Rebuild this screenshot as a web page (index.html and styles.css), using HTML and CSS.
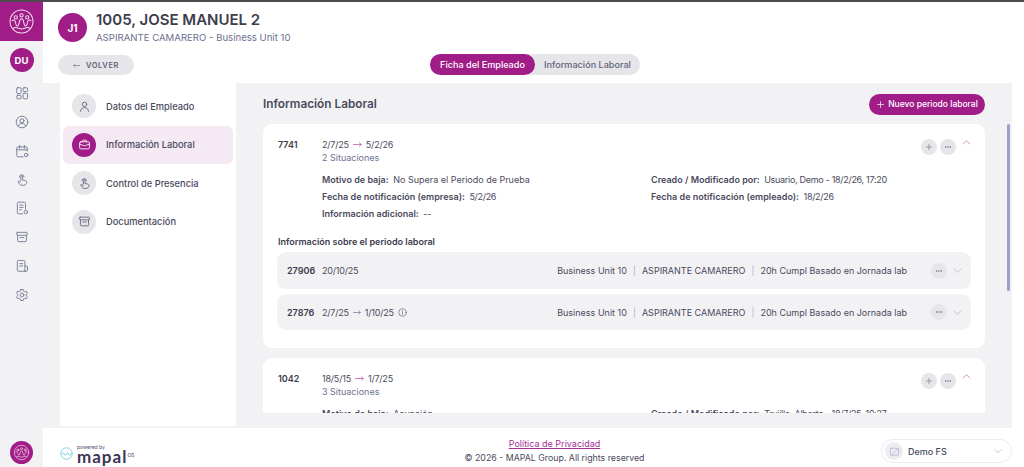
FILE: index.html
```html
<!DOCTYPE html>
<html lang="es">
<head>
<meta charset="utf-8">
<title>Información Laboral</title>
<link rel="stylesheet" href="styles.css">
</head>
<body>
<svg class="defs" width="0" height="0">
  <defs>
    <symbol id="i-user" viewBox="0 0 24 24"><circle cx="12" cy="8" r="4"/><path d="M4.500 21c.5-4.500 3.500-7 7.500-7s7 2.500 7.500 7"/></symbol>
    <symbol id="i-case" viewBox="0 0 24 24"><rect x="3" y="7" width="18" height="13" rx="2"/><path d="M8.500 7V5a1 1 0 0 1 1-1h5a1 1 0 0 1 1 1v2M3 11l7 3h4l7-3"/></symbol>
    <symbol id="i-hand" viewBox="0 0 24 24"><path d="M10 13V6.500a1.500 1.500 0 0 1 3 0V12l5 1c1.500.3 2.500 1.500 2.300 3-.3 3-2.300 5-5.300 5h-3c-2.500 0-4-1-5-3l-2-3.500c1-1 2.500-.8 3.500.5L10 16"/><path d="M7.500 7a4 4 0 0 1 8 0"/></symbol>
    <symbol id="i-box" viewBox="0 0 24 24"><rect x="3" y="4" width="18" height="5" rx="1"/><path d="M4.500 9v9a2 2 0 0 0 2 2h11a2 2 0 0 0 2-2V9M9 13h6"/></symbol>
    <symbol id="i-plus" viewBox="0 0 24 24"><path d="M12 4v16M4 12h16"/></symbol>
    <symbol id="i-down" viewBox="0 0 24 24"><path d="M3 8l9 9 9-9"/></symbol>
    <symbol id="i-up" viewBox="0 0 24 24"><path d="M3 16l9-9 9 9"/></symbol>
    <symbol id="i-logo" viewBox="0 0 40 40"><circle cx="20" cy="20" r="17"/><circle cx="20" cy="11" r="2.400"/><circle cx="11.500" cy="14" r="2.400"/><circle cx="28.500" cy="14" r="2.400"/><path d="M6 19c3-3 5 0 5.500 4s3.500 5 4.500 1 1-8 4-8 3 4 4 8 4 3 4.500-1 2.500-7 5.500-4"/><path d="M8 30c4-3 8 1 12 1s8-4 12-1"/></symbol>
    <symbol id="i-dots" viewBox="0 0 24 24"><circle cx="5" cy="12" r="2.200"/><circle cx="12" cy="12" r="2.200"/><circle cx="19" cy="12" r="2.200"/></symbol>
    <symbol id="i-arrow" viewBox="0 0 24 12"><path d="M1 6h21M17 1.500 22 6l-5 4.500"/></symbol>
  </defs>
</svg>

<div class="topline"></div>
<div class="app">
  <nav class="rail">
    <div class="rail-logo"><svg class="ico logo-ico"><use href="#i-logo"/></svg></div>
    <div class="rail-avatar">DU</div>
    <div class="rail-icons">
      <svg class="rail-ico" viewBox="0 0 24 24"><rect x="3" y="3" width="7.500" height="10" rx="1.500"/><rect x="14" y="3" width="7.500" height="6.500" rx="1.500"/><rect x="3" y="16" width="7.500" height="6" rx="1.500"/><rect x="14" y="12.500" width="7.500" height="9.500" rx="1.500"/></svg>
      <svg class="rail-ico" viewBox="0 0 24 24"><circle cx="12" cy="12" r="10"/><circle cx="12" cy="10" r="3.500"/><path d="M5.500 19.500c1-3.500 3.500-5 6.500-5s5.500 1.500 6.500 5"/></svg>
      <svg class="rail-ico" viewBox="0 0 24 24"><path d="M21 12V7a2 2 0 0 0-2-2H5a2 2 0 0 0-2 2v13a2 2 0 0 0 2 2h9M3 10h18M8 2.500v5M16 2.500v5"/><circle cx="19" cy="19" r="3"/></svg>
      <svg class="rail-ico"><use href="#i-hand"/></svg>
      <svg class="rail-ico" viewBox="0 0 24 24"><path d="M13 22H6a2 2 0 0 1-2-2V4a2 2 0 0 1 2-2h10a2 2 0 0 1 2 2v10M8 7h6M8 11h6M8 15h3"/><circle cx="18.500" cy="19" r="3"/></svg>
      <svg class="rail-ico"><use href="#i-box"/></svg>
      <svg class="rail-ico" viewBox="0 0 24 24"><path d="M17 21H6a2 2 0 0 1-2-2V4a1.500 1.500 0 0 1 1.500-1.500H15A2 2 0 0 1 17 4.500V21zM17 12h3.500a1 1 0 0 1 1 1v6a2 2 0 0 1-2 2H17M8 8h5M8 12h5"/></svg>
      <svg class="rail-ico" viewBox="0 0 24 24"><circle cx="12" cy="12" r="3.200"/><path d="M10 2.500h4l.6 2.900 1.900 1.100 2.800-1 2 3.500-2.200 1.900v2.200l2.200 1.900-2 3.500-2.800-1-1.900 1.100-.6 2.900h-4l-.6-2.900-1.900-1.100-2.800 1-2-3.500L4.900 13v-2L2.700 9l2-3.500 2.800 1 1.900-1.100z"/></svg>
    </div>
    <div class="rail-foot"><svg class="ico foot-ico"><use href="#i-logo"/></svg></div>
  </nav>

  <div class="content">
    <header class="head">
      <div class="avatar">J1</div>
      <div class="who">
        <h1 class="name">1005, JOSE MANUEL 2</h1>
        <p class="role">ASPIRANTE CAMARERO - Business Unit 10</p>
      </div>
    </header>

    <div class="toolbar">
      <button class="back"><svg class="ico back-ico" viewBox="0 0 24 12"><path d="M23 6H2M7 1.500 2 6l5 4.500"/></svg>VOLVER</button>
      <div class="tabs">
        <span class="tab tab-on">Ficha del Empleado</span>
        <span class="tab">Información Laboral</span>
      </div>
    </div>

    <main class="body">
      <aside class="menu">
        <a class="menu-item"><span class="menu-dot"><svg class="ico"><use href="#i-user"/></svg></span>Datos del Empleado</a>
        <a class="menu-item menu-on"><span class="menu-dot"><svg class="ico"><use href="#i-case"/></svg></span>Información Laboral</a>
        <a class="menu-item"><span class="menu-dot"><svg class="ico"><use href="#i-hand"/></svg></span>Control de Presencia</a>
        <a class="menu-item"><span class="menu-dot"><svg class="ico"><use href="#i-box"/></svg></span>Documentación</a>
      </aside>

      <section class="panel">
        <div class="panel-head">
          <h2 class="panel-title">Información Laboral</h2>
          <button class="new"><svg class="ico new-ico"><use href="#i-plus"/></svg>Nuevo periodo laboral</button>
        </div>
        <div class="scroll">
          <article class="card">
            <div class="card-head">
              <b class="card-id">7741</b>
              <div class="card-when">
                <div class="dates">2/7/25 <svg class="ico arrow"><use href="#i-arrow"/></svg> 5/2/26</div>
                <div class="situ">2 Situaciones</div>
              </div>
              <div class="acts">
                <span class="btn"><svg class="ico plus"><use href="#i-plus"/></svg></span>
                <span class="btn"><svg class="ico dots"><use href="#i-dots"/></svg></span>
                <svg class="ico chev-up"><use href="#i-up"/></svg>
              </div>
            </div>
            <div class="facts">
              <div><b>Motivo de baja:</b> No Supera el Periodo de Prueba</div>
              <div><b>Creado / Modificado por:</b> <span class="tight">Usuario, Demo - 18/2/26, 17:20</span></div>
              <div><b>Fecha de notificación (empresa):</b> <span class="tight">5/2/26</span></div>
              <div><b>Fecha de notificación (empleado):</b> <span class="tight">18/2/26</span></div>
              <div><b>Información adicional:</b> --</div>
            </div>
            <h3 class="sub-title">Información sobre el periodo laboral</h3>
            <div class="row row-a">
              <b class="row-id">27906</b>
              <span class="row-date">20/10/25</span>
              <span class="row-info">Business Unit 10<i>|</i>ASPIRANTE CAMARERO<i>|</i>20h Cumpl Basado en Jornada lab</span>
              <span class="btn"><svg class="ico dots"><use href="#i-dots"/></svg></span>
              <svg class="ico chev-down"><use href="#i-down"/></svg>
            </div>
            <div class="row">
              <b class="row-id">27876</b>
              <span class="row-date">2/7/25 <svg class="ico arrow-g"><use href="#i-arrow"/></svg> 1/10/25 <svg class="ico info" viewBox="0 0 24 24"><circle cx="12" cy="12" r="10"/><path d="M12 11v6M12 7v1.500"/></svg></span>
              <span class="row-info">Business Unit 10<i>|</i>ASPIRANTE CAMARERO<i>|</i>20h Cumpl Basado en Jornada lab</span>
              <span class="btn"><svg class="ico dots"><use href="#i-dots"/></svg></span>
              <svg class="ico chev-down"><use href="#i-down"/></svg>
            </div>
          </article>

          <article class="card">
            <div class="card-head">
              <b class="card-id">1042</b>
              <div class="card-when">
                <div class="dates">18/5/15 <svg class="ico arrow"><use href="#i-arrow"/></svg> 1/7/25</div>
                <div class="situ">3 Situaciones</div>
              </div>
              <div class="acts">
                <span class="btn"><svg class="ico plus"><use href="#i-plus"/></svg></span>
                <span class="btn"><svg class="ico dots"><use href="#i-dots"/></svg></span>
                <svg class="ico chev-up"><use href="#i-up"/></svg>
              </div>
            </div>
            <div class="facts">
              <div><b>Motivo de baja:</b> Asunción</div>
              <div><b>Creado / Modificado por:</b> <span class="tight">Trujillo, Alberto - 18/7/25, 10:27</span></div>
            </div>
          </article>
        </div>
        <div class="scrollbar"></div>
      </section>
    </main>

    <footer class="foot">
      <div class="brand">
        <svg class="brand-ico" viewBox="0 0 24 24"><circle cx="12" cy="12" r="10.500"/><path d="M3 13c2-3 3.500-3 5 0s3 3 4 0 3-3 4 0 3 2 5 0"/></svg>
        <div class="brand-text"><span class="powered">powered by</span><span class="mapal">mapal<sup>OS</sup></span></div>
      </div>
      <div class="legal">
        <a class="policy">Política de Privacidad</a>
        <span>© 2026 - MAPAL Group. All rights reserved</span>
      </div>
      <div class="select">
        <span class="sel-dot"><svg class="ico sel-ico" viewBox="0 0 24 24"><rect x="3" y="5" width="18" height="15" rx="1"/><path d="M5 20 20 5"/></svg></span>
        <span class="sel-text">Demo FS</span>
        <svg class="ico chev-sel"><use href="#i-down"/></svg>
      </div>
    </footer>
  </div>
</div>
</body>
</html>
```

FILE: styles.css
```css
* { box-sizing: border-box; }
html, body { margin: 0; height: 100%; }
body {
  font-family: "Inter", "Liberation Sans", sans-serif;
  font-size: 9px;
  color: #4a4a5c;
  background: #fff;
  overflow: hidden;
  display: flex;
  flex-direction: column;
}
h1, h2, h3, p { margin: 0; }
button { font-family: inherit; border: 0; padding: 0; }
.defs { position: absolute; }
.ico { fill: none; stroke: currentColor; stroke-width: 1.6; stroke-linecap: round; stroke-linejoin: round; display: block; }

.topline { height: 2px; background: #4b4b4f; flex: none; }
.app { flex: 1; min-height: 0; display: flex; }

.rail { width: 43px; flex: none; background: #f2f2f5; display: flex; flex-direction: column; align-items: center; }
.rail-logo { width: 43px; height: 39px; background: #a01c87; display: flex; align-items: center; justify-content: center; color: #f3dcee; }
.logo-ico { width: 27px; height: 27px; stroke-width: 1.5; }
.rail-avatar { width: 24px; height: 24px; margin-top: 7px; border-radius: 50%; background: #a01c87; color: #fff; font-size: 9.500px; font-weight: 700; display: flex; align-items: center; justify-content: center; }
.rail-icons { margin-top: 14px; display: flex; flex-direction: column; gap: 14.860px; color: #6f7390; }
.rail-ico { width: 14px; height: 14px; fill: none; stroke: currentColor; stroke-width: 1.500; stroke-linecap: round; stroke-linejoin: round; display: block; }
.rail-foot { margin-top: auto; margin-bottom: 3px; width: 23px; height: 23px; border-radius: 50%; background: #a01c87; color: #f3dcee; display: flex; align-items: center; justify-content: center; }
.foot-ico { width: 17px; height: 17px; }

.content { flex: 1; min-width: 0; display: flex; flex-direction: column; }
.head { height: 50px; flex: none; display: flex; align-items: flex-start; gap: 9px; padding: 11px 0 0 15px; }
.who { margin-top: -1px; }
.avatar { width: 29px; height: 29px; border-radius: 50%; background: #a01c87; color: #fff; font-size: 10px; font-weight: 700; display: flex; align-items: center; justify-content: center; }
.name { font-size: 15px; line-height: 16px; font-weight: 600; color: #3d3d4d; }
.role { font-size: 9.600px; line-height: 13px; margin-top: 3px; color: #6d7190; }

.toolbar { height: 31px; flex: none; position: relative; display: flex; align-items: flex-start; padding: 3px 0 0 15px; }
.back { width: 76px; height: 20px; border-radius: 10px; background: #e6e6ea; color: #5f6378; font-size: 7.500px; font-weight: 600; letter-spacing: .6px; display: flex; align-items: center; justify-content: center; gap: 6px; }
.back-ico { width: 7px; height: 5px; stroke-width: 2; }
.tabs { position: absolute; left: 387px; top: 2px; display: flex; height: 21px; border-radius: 11px; background: #e6e6ea; }
.tab { display: flex; align-items: center; justify-content: center; font-size: 9.100px; font-weight: 500; color: #5f6378; width: 105px; border-radius: 11px; }
.tab-on { background: #a01c87; color: #fff; }

.body { flex: 1; min-height: 0; display: flex; background: #f2f2f5; margin-right: 12px; }
.menu { width: 178px; flex: none; margin-left: 15px; border: solid #f2f2f5; border-width: 0 0 2px 2px; background: #fff; padding: 4px 3px 0 3px; display: flex; flex-direction: column; }
.menu-item { height: 38.500px; display: flex; align-items: center; gap: 10px; padding-left: 9px; font-size: 9.300px; font-weight: 500; color: #4a4a5c; border-radius: 6px; }
.menu-on { background: #f5e9f4; }
.menu-dot { width: 24px; height: 24px; border-radius: 50%; background: #e6e6ea; color: #5f6378; display: flex; align-items: center; justify-content: center; }
.menu-dot .ico { width: 13px; height: 13px; }
.menu-on .menu-dot { background: #a01c87; color: #fff; }

.panel { flex: 1; min-width: 0; position: relative; padding: 0 27px 15px 27px; display: flex; flex-direction: column; }
.panel-head { height: 41px; flex: none; display: flex; align-items: center; justify-content: space-between; }
.panel-title { font-size: 11.800px; font-weight: 600; color: #4a4a5c; }
.new { width: 116px; height: 21px; margin-top: 1px; border-radius: 11px; background: #a01c87; color: #fff; font-size: 8.500px; font-weight: 500; display: flex; align-items: center; justify-content: center; gap: 3px; }
.new-ico { width: 9px; height: 9px; stroke-width: 1.800; }
.scroll { flex: 1; min-height: 0; overflow: hidden; display: flex; flex-direction: column; gap: 10px; }
.scrollbar { position: absolute; right: 2px; top: 41px; width: 3px; height: 167px; background: #9ba1c6; border-radius: 2px; }

.card { flex: none; background: #fff; border-radius: 9px; padding: 14px 14px 18px 15px; }
.card-head { display: flex; align-items: flex-start; height: 35px; }
.card-id { width: 44px; font-weight: 600; color: #3d3d4d; font-size: 9px; line-height: 13px; }
.card-when { flex: 1; }
.dates { display: flex; align-items: center; gap: 4px; line-height: 13px; color: #4a4a5c; letter-spacing: -.2px; }
.arrow { width: 9px; height: 5px; color: #b75aab; stroke-width: 2; }
.arrow-g { width: 8px; height: 5px; color: #6d7190; stroke-width: 2; }
.situ { line-height: 13px; color: #6d7190; }
.acts { display: flex; align-items: flex-start; gap: 3px; }
.btn { width: 16px; height: 16px; border-radius: 50%; background: #e6e6ea; color: #5f6378; display: flex; align-items: center; justify-content: center; flex: none; margin-top: 1px; }
.row .btn { margin-top: 0; }
.plus { width: 8px; height: 8px; }
.dots { width: 8px; height: 8px; fill: currentColor; stroke: none; }
.chev-up { width: 9px; height: 9px; color: #b44aa4; margin-left: 3px; }
.facts { display: grid; grid-template-columns: 329px 1fr; row-gap: 4px; padding-left: 44px; line-height: 13px; }
.facts b { font-weight: 600; color: #4a4a5c; margin-right: 2px; }
.tight { letter-spacing: -.3px; }
.sub-title { font-size: 9px; font-weight: 600; color: #3d3d4d; line-height: 13px; margin-top: 15px; margin-bottom: 4px; }
.row { height: 36px; border-radius: 9px; background: #f2f2f5; display: flex; align-items: center; padding: 0 9px 0 10px; margin-left: -1px; }
.row-a { height: 37px; margin-bottom: 5px; }
.row-id { font-weight: 600; color: #3d3d4d; width: 35px; }
.row-date { display: flex; align-items: center; gap: 4px; letter-spacing: -.2px; }
.row-info { margin-left: auto; margin-right: 24px; }
.row-info i { font-style: normal; color: #c9a6c4; margin: 0 6px; }
.chev-down { width: 9px; height: 9px; color: #8f93a8; margin-left: 6px; stroke-width: 1.300; }
.info { width: 9px; height: 9px; stroke-width: 1.500; }

.foot { height: 39px; flex: none; position: relative; display: flex; align-items: flex-start; justify-content: center; padding-top: 9px; }
.brand { position: absolute; left: 17px; top: 16px; display: flex; align-items: center; gap: 4px; }
.brand-ico { width: 13px; height: 13px; fill: none; stroke: #6fd0dc; stroke-width: 1.600; stroke-linecap: round; }
.brand-text { display: flex; flex-direction: column; }
.powered { font-size: 5px; line-height: 6px; color: #4d4d6a; }
.mapal { font-family: "Lato", sans-serif; font-size: 17px; line-height: 13px; font-weight: 700; color: #3b3555; letter-spacing: 1px; }
.mapal sup { font-size: 5px; line-height: 0; font-weight: 400; vertical-align: 6px; letter-spacing: 0; }
.legal { display: flex; flex-direction: column; align-items: center; margin-left: 42px; line-height: 14px; color: #4a4a5c; font-size: 8.800px; }
.policy { color: #a6309a; text-decoration: underline; font-size: 9px; }
.select { position: absolute; right: 12px; top: 11px; width: 131px; height: 24px; border-radius: 12px; border: 1px solid #ececf0; display: flex; align-items: center; padding: 0 9px 0 3px; gap: 5px; color: #4a4a5c; font-size: 9px; font-weight: 500; }
.sel-dot { width: 18px; height: 18px; border-radius: 50%; background: #ececf2; color: #a9b0cf; display: flex; align-items: center; justify-content: center; }
.sel-ico { width: 11px; height: 11px; stroke-width: 1.500; }
.sel-text { flex: 1; }
.chev-sel { width: 8px; height: 8px; color: #8f93a8; stroke-width: 1.500; }
```
